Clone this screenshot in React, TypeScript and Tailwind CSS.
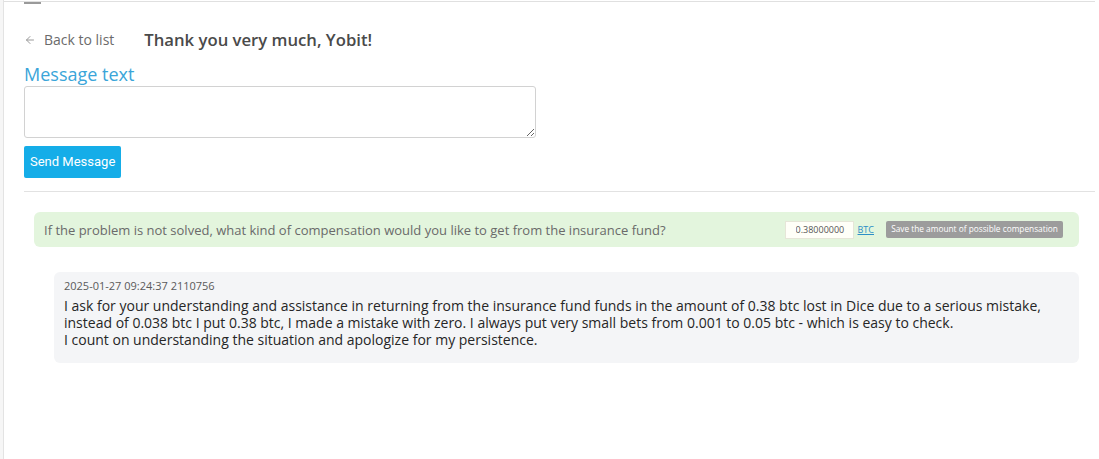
import { ArrowLeft } from 'lucide-react';

export default function App() {
  return (
    <div className="h-[459px] w-[1099px] overflow-hidden bg-white font-['Open_Sans',sans-serif]">
      <div className="flex h-full">
        <div className="w-[4px] shrink-0 border-r border-[#e3e3e3] bg-[#f6f6f6]" />
        <div className="flex-1 pr-[4px]">
          <div className="mt-px border-t border-[#e0e0e0] pl-[20px]">
            <div className="h-[2px] w-[17px] bg-[#9a9a9a]" />
          </div>

          <div className="pl-[20px]">
            <div className="mt-[23px] flex items-center">
              <a href="#" className="flex items-center gap-[8px] text-[14px] text-[#6b6b6b]">
                <ArrowLeft className="h-[12px] w-[12px] text-[#9a9a9a]" strokeWidth={2} />
                Back to list
              </a>
              <h1 className="ml-[30px] text-[16.7px] font-semibold text-[#4a4a4a]">
                Thank you very much, Yobit!
              </h1>
            </div>

            <div className="mt-[11px] text-[18px] leading-[22px] text-[#3aa5d9]">Message text</div>
            <textarea className="mt-px block h-[52px] w-[512px] rounded-[3px] border border-[#d2d2d2] bg-white" />
            <button className="mt-[8px] h-[32px] rounded-[2px] bg-[#15ade8] px-[6px] text-[13px] text-white font-['Roboto',sans-serif]">
              Send Message
            </button>

            <div className="mt-[13px] border-t border-[#e2e2e2]" />

            <div className="mt-[20px] ml-[10px] mr-[16px] flex h-[35px] items-center justify-between rounded-[6px] bg-[#e3f5dd] pl-[10px] pr-[16px]">
              <span className="pt-[2px] text-[13px] text-[#6a6a6a]">
                If the problem is not solved, what kind of compensation would you like to get from the insurance fund?
              </span>
              <div className="flex items-center">
                <input
                  readOnly
                  value="0.38000000"
                  className="h-[18px] w-[69px] border border-[#e6e6d8] bg-[#fffff8] pl-[10px] pr-0 text-[9px] text-[#555]"
                />
                <a href="#" className="ml-[4px] text-[9px] text-[#2d8fc6] underline">BTC</a>
                <span className="ml-[12px] flex h-[17px] w-[177px] items-center justify-center rounded-[2px] bg-[#9c9c9c] text-[8.3px] text-white">
                  Save the amount of possible compensation
                </span>
              </div>
            </div>

            <div className="mt-[25px] ml-[30px] mr-[16px] rounded-[6px] bg-[#f4f5f7] px-[10px] pt-[6px] pb-[15px]">
              <div className="text-[11px] leading-[15px] text-[#5a5a5a]">2025-01-27 09:24:37 2110756</div>
              <p className="mt-[4px] text-[14px] leading-[17px] text-[#262626]">
                I ask for your understanding and assistance in returning from the insurance fund funds in the amount of 0.38 btc lost in Dice due to a serious mistake, instead of 0.038 btc I put 0.38 btc, I made a mistake with zero. I always put very small bets from 0.001 to 0.05 btc - which is easy to check.
                <br />
                I count on understanding the situation and apologize for my persistence.
              </p>
            </div>
          </div>
        </div>
      </div>
    </div>
  );
}
